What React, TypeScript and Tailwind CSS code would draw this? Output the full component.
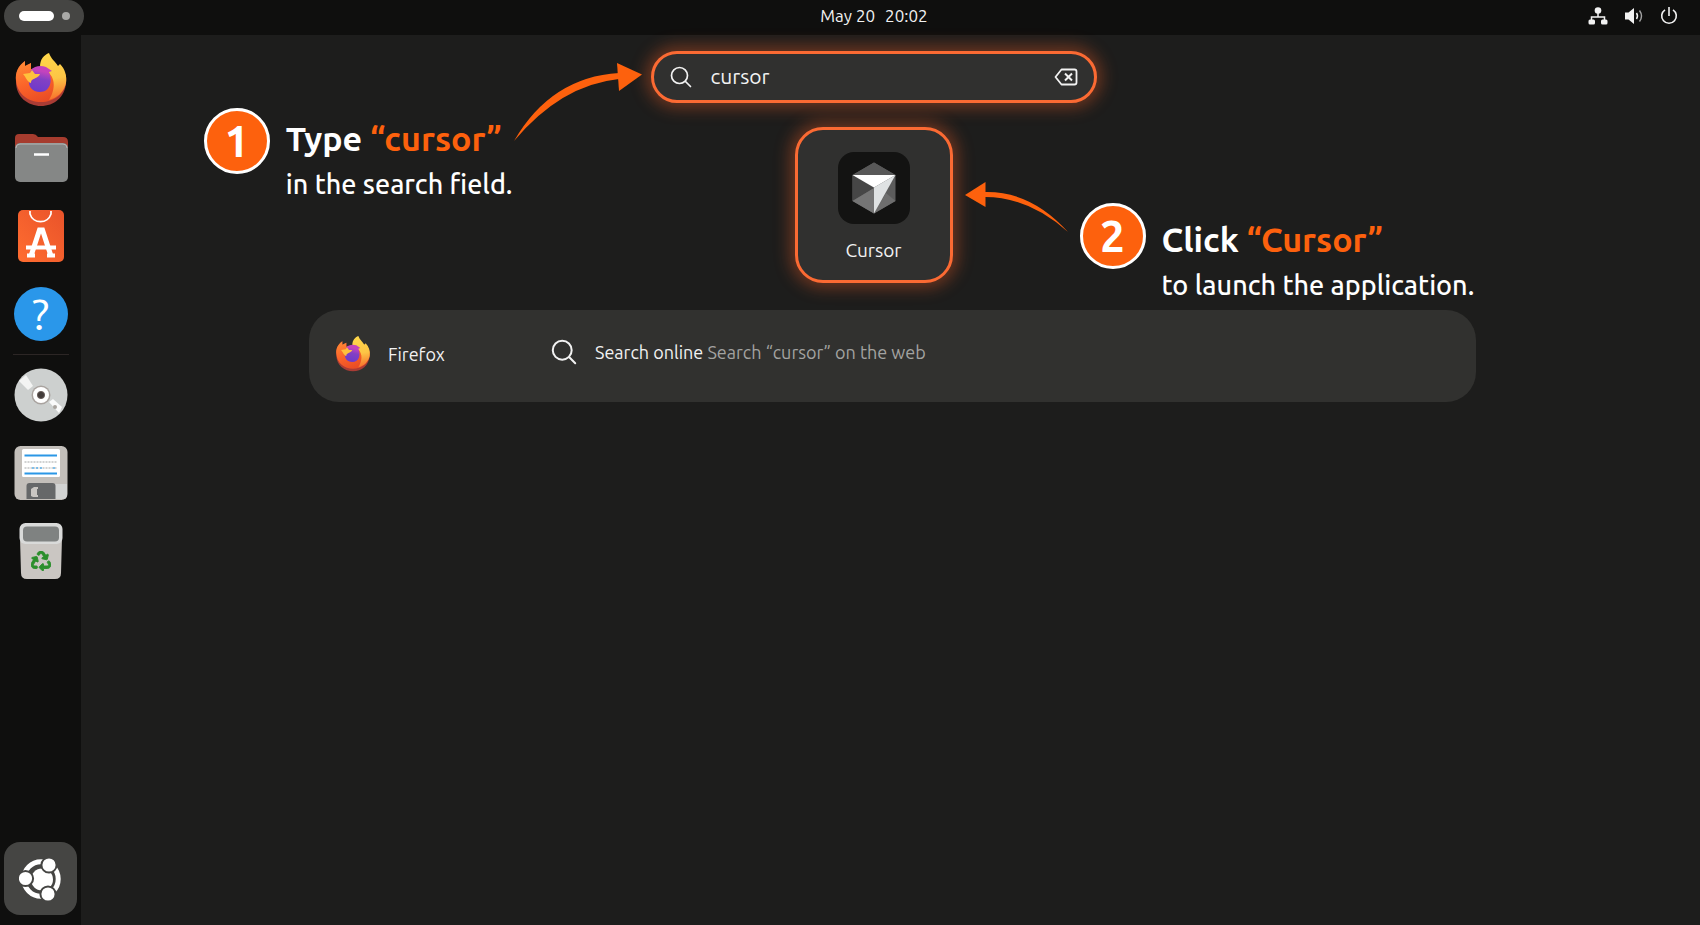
import { useState } from "react";
import type { ReactNode } from "react";
import { FaRecycle } from "react-icons/fa";

function FirefoxIcon({ className }: { className: string }) {
  return (
    <svg viewBox="0 0 54 56" className={className} aria-hidden="true">
      <defs>
        <linearGradient id="ff-body" x1="0.15" y1="0" x2="0.6" y2="1">
          <stop offset="0" stopColor="#ff8a35" />
          <stop offset="0.5" stopColor="#fb6429" />
          <stop offset="1" stopColor="#e84a24" />
        </linearGradient>
        <linearGradient id="ff-flame" x1="0.4" y1="0" x2="0.5" y2="1">
          <stop offset="0" stopColor="#ffd84a" />
          <stop offset="0.55" stopColor="#fdc545" />
          <stop offset="1" stopColor="#f7702c" />
        </linearGradient>
        <linearGradient id="ff-globe" x1="0.6" y1="0" x2="0.4" y2="1">
          <stop offset="0.2" stopColor="#c443bd" />
          <stop offset="0.5" stopColor="#8240c4" />
          <stop offset="1" stopColor="#6c3acb" />
        </linearGradient>
      </defs>
      <path d="M2 30C1 21 4 14 11 9v5l6-3v6l28-3c5 5 8 10 7 17-1 14-12 23-25 23S2 45 2 30z" fill="#a93c35" />
      <path d="M2 28C1 21 4 14 11 9v5l6-3v6l28-3c5 4 8 9 7 15-1 13-12 21-25 21S3 42 2 28z" fill="url(#ff-body)" />
      <path d="M26 15c0-8 4-12 9-14 2 6 6 8 9 13l2-2c5 5 7 12 6 19-2 9-9 15-17 17 5-8 8-20-1-28z" fill="url(#ff-flame)" />
      <path d="M17 18c3-4 10-5 15-3l6 4-3 1c4 9 1 20-9 20-8 0-12-6-11-12z" fill="url(#ff-globe)" />
      <path d="M9 22l7-1 2-3 3 4h5c-1 3-5 4-8 6-1 1-1 2-1 3-4-1-5-6-8-9z" fill="#ffc13c" />
    </svg>
  );
}

function FilesIcon() {
  return (
    <svg viewBox="0 0 54 54" className="size-[54px]" aria-hidden="true">
      <path d="M1 7q0-4 4-4h14q3 0 5 3h25q5 0 5 5v12H1z" fill="#a63c2e" />
      <rect x="1" y="12" width="53" height="39" rx="5" fill="#858786" />
      <path d="M2 17q0-4 4-4h43q4 0 4 4" stroke="#b4b6b4" fill="none" />
      <path d="M20 23.500h15" stroke="#fff" strokeWidth="2.500" />
    </svg>
  );
}

function AppCenterIcon() {
  return (
    <svg viewBox="0 0 54 54" className="size-[54px]" aria-hidden="true">
      <defs>
        <linearGradient id="ac" x1="1" y1="0" x2="0" y2="1">
          <stop offset="0" stopColor="#e9532a" />
          <stop offset="1" stopColor="#ff6d30" />
        </linearGradient>
      </defs>
      <rect x="4" y="1" width="46" height="52" rx="5" fill="url(#ac)" />
      <g stroke="#fff" fill="none">
        <path d="M16 2v3a11 11 0 0 0 21 0V2" strokeWidth="1.700" />
        <path d="M17 47l8.500-26h3l8.500 26" strokeWidth="5" />
        <path d="M12 38.500h30M13 46.500h8M33 46.500h8" strokeWidth="4" />
      </g>
    </svg>
  );
}

function HelpIcon() {
  return (
    <span className="flex size-[54px] items-center justify-center rounded-full bg-[#2a97ea] text-[44px] leading-none text-white">
      ?
    </span>
  );
}

function DiscIcon() {
  return (
    <svg viewBox="0 0 54 54" className="size-[54px]" aria-hidden="true">
      <circle cx="27" cy="27" r="26.500" fill="#cdd0cf" />
      <path d="M5 13l7-6 7 11-5 4z" fill="#f3f4f3" />
      <path d="M35 34l4-3 9 8-3 6z" fill="#fafafa" />
      <circle cx="41" cy="39" r="2" fill="#a8a39e" />
      <circle cx="27" cy="27" r="9.500" fill="#a9a39f" />
      <circle cx="27" cy="27" r="8" fill="#fff" />
      <circle cx="27" cy="27" r="3.600" fill="#433c3a" stroke="#6a5f5b" />
    </svg>
  );
}

function FloppyIcon() {
  return (
    <svg viewBox="0 0 54 54" className="size-[54px]" aria-hidden="true">
      <rect x="0.500" y="0" width="53" height="54" rx="6" fill="#c3bfba" />
      <path d="M41 38h12v11q0 4-4 4h-8z" fill="#d2d3d2" />
      <rect x="8" y="3" width="38" height="28" rx="1.500" fill="#fff" />
      <path d="M10.500 9.500H43M10.500 27.500H43" stroke="#2b97e6" strokeWidth="2" />
      <path d="M10.500 16H43M10.500 22H43" stroke="#c2c4c4" strokeWidth="1.500" strokeDasharray="2 1" />
      <path d="M18 22h12M39 22h4" stroke="#5fb2ec" strokeWidth="1.500" strokeDasharray="2 2" />
      <path d="M12.500 53V40q0-3 3-3h23q3 0 3 3v13z" fill="#666869" />
      <path d="M17 50v-7l3-2h4v2h-1v6h1v2h-5z" fill="#c9c6c2" />
    </svg>
  );
}

function TrashIcon() {
  return (
    <span className="relative flex h-14 w-11 items-end justify-center">
      <svg viewBox="0 0 44 56" className="absolute inset-0" aria-hidden="true">
        <path d="M1 15h42l-1 35q0 6-6 6H8q-6 0-6-6z" fill="#cac6c2" />
        <rect x="0.500" y="0" width="43" height="21" rx="6" fill="#d9dad9" />
        <rect x="4" y="3.500" width="36" height="15" rx="4" fill="#7f8281" />
      </svg>
      <FaRecycle className="relative mb-2 size-5 stroke-[#2b8f2c] stroke-[24px] text-[#2b8f2c]" />
    </span>
  );
}

function UbuntuIcon() {
  return (
    <svg viewBox="0 0 44 44" className="size-11" aria-hidden="true">
      <circle cx="22" cy="22" r="17.200" fill="none" stroke="#fff" strokeWidth="5" />
      <circle cx="23" cy="22.500" r="11" fill="#fff" />
      <g fill="#fff" stroke="#454543" strokeWidth="2">
        <circle cx="6.500" cy="21.500" r="7.600" />
        <circle cx="30" cy="8" r="7.600" />
        <circle cx="29" cy="37" r="7.600" />
      </g>
    </svg>
  );
}

function CursorLogo() {
  return (
    <span className="flex size-[72px] items-center justify-center rounded-2xl bg-[#131312]">
      <svg viewBox="0 0 44 52" className="h-[52px] w-11" aria-hidden="true">
        <path d="M22 0.500L43.500 13v26L22 51.500 0.500 39V13z" fill="#5c5c5c" />
        <path d="M22 0.500L43.500 13H0.500z" fill="#585858" />
        <path d="M0.500 13L22 26 0.500 39z" fill="#464646" />
        <path d="M0.500 39L22 26v25.500z" fill="#757575" />
        <path d="M43.500 39L22 51.500 34 31z" fill="#6e6e6e" />
        <path d="M0.500 13h43L22 25.500z" fill="#fff" />
        <path d="M43.500 13L22 51.500v-26z" fill="#dfe2e3" />
      </svg>
    </span>
  );
}

function SearchIcon({ className }: { className: string }) {
  return (
    <svg viewBox="0 0 22 22" className={className} fill="none" stroke="#f2f2f2" strokeWidth="1.700" aria-hidden="true">
      <circle cx="9.500" cy="9.500" r="8" />
      <path d="M15.500 15.500l5 5" strokeLinecap="round" />
    </svg>
  );
}

const dockApps: { name: string; icon: ReactNode }[] = [
  { name: "Firefox", icon: <FirefoxIcon className="h-14 w-[54px]" /> },
  { name: "Files", icon: <FilesIcon /> },
  { name: "App Center", icon: <AppCenterIcon /> },
  { name: "Help", icon: <HelpIcon /> },
];

const dockVolumes: { name: string; icon: ReactNode }[] = [
  { name: "Disc", icon: <DiscIcon /> },
  { name: "Floppy disk", icon: <FloppyIcon /> },
  { name: "Trash", icon: <TrashIcon /> },
];

function DockList({ items }: { items: { name: string; icon: ReactNode }[] }) {
  return (
    <ul className="flex flex-col gap-6">
      {items.map((item) => (
        <li key={item.name}>
          <button type="button" aria-label={item.name} className="flex size-[54px] items-center justify-center">
            {item.icon}
          </button>
        </li>
      ))}
    </ul>
  );
}

function Dock() {
  return (
    <nav aria-label="Dock" className="flex w-[81px] shrink-0 flex-col items-center bg-[#0f0f0e] pt-[18px] pb-[10px]">
      <DockList items={dockApps} />
      <hr className="my-[13px] w-14 border-[#2c2625]" />
      <DockList items={dockVolumes} />
      <button
        type="button"
        aria-label="Show apps"
        className="mt-auto flex size-[73px] items-center justify-center rounded-2xl bg-[#454543]"
      >
        <UbuntuIcon />
      </button>
    </nav>
  );
}

function TopBar() {
  return (
    <header className="grid h-[35px] shrink-0 grid-cols-[48px_1fr_auto_1fr] bg-[#0f0f0e] text-[#f2f2f2]">
      <button
        type="button"
        aria-label="Activities"
        className="col-span-2 ml-1 flex h-8 w-20 items-center justify-center gap-2 rounded-full bg-[#454543]"
      >
        <span className="h-[10px] w-[35px] rounded-full bg-white" />
        <span className="size-2 rounded-full bg-[#a9a9a7]" />
      </button>
      <button type="button" className="flex h-8 items-center gap-[10px] text-[17px]">
        <span>May 20</span>
        <span>20:02</span>
      </button>
      <div className="mr-[22px] flex h-8 items-center justify-end gap-4">
        <svg viewBox="0 0 20 18" className="h-[18px] w-5" fill="currentColor" aria-hidden="true">
          <circle cx="10" cy="3.500" r="3.300" />
          <path d="M10 6v4M3.500 14v-4h13v4" fill="none" stroke="currentColor" strokeWidth="1.500" />
          <rect x="0.500" y="12.500" width="6.500" height="5" rx="1.500" />
          <rect x="13" y="12.500" width="6.500" height="5" rx="1.500" />
        </svg>
        <svg viewBox="0 0 20 18" className="h-[18px] w-5" fill="currentColor" aria-hidden="true">
          <path d="M1 5.500h3.500L10 1v16l-5.500-4.500H1z" />
          <path d="M12.500 6q2 3 0 6" fill="none" stroke="currentColor" strokeWidth="1.500" />
          <path d="M15.500 3.500q4 5.500 0 11" fill="none" stroke="#a3a3a3" strokeWidth="1.400" />
        </svg>
        <svg viewBox="0 0 18 18" className="size-[18px]" fill="none" stroke="currentColor" strokeWidth="1.600" aria-hidden="true">
          <path d="M9 0v9M5 2.800a7.300 7.300 0 1 0 8 0" />
        </svg>
      </div>
    </header>
  );
}

interface CalloutProps {
  step: number;
  verb: string;
  target: string;
  detail: string;
  textClassName: string;
}

function Callout({ step, verb, target, detail, textClassName }: CalloutProps) {
  return (
    <div className="flex gap-4 text-white">
      <span className="flex size-[66px] shrink-0 items-center justify-center rounded-full border-[3px] border-white bg-[#fd610d] text-[44px] leading-none font-bold">
        {step}
      </span>
      <div className={`whitespace-nowrap ${textClassName}`}>
        <h2 className="text-[34px] leading-[45px] font-bold">
          {verb} <span className="text-[#fd610d]">“{target}”</span>
        </h2>
        <p className="text-[27px] leading-[47px] font-medium">{detail}</p>
      </div>
    </div>
  );
}

export default function App() {
  const [query, setQuery] = useState("cursor");

  return (
    <div className="flex min-h-screen flex-col bg-[#1d1d1c] font-['Ubuntu','Noto_Sans',sans-serif]">
      <TopBar />
      <div className="flex flex-1">
        <Dock />
        <main className="min-w-0 flex-1 pt-4">
          <div className="grid grid-cols-[1fr_446px_1fr] grid-rows-[52px_156px] gap-y-6 pr-[34px]">
            <form
              role="search"
              onSubmit={(e) => e.preventDefault()}
              className="col-start-2 row-start-1 flex items-center rounded-full border-[3px] border-[#fb6a33] bg-[#30302f] px-4 shadow-[0_0_16px_5px_rgba(251,96,40,0.360)]"
            >
              <SearchIcon className="size-[22px] shrink-0" />
              <input
                type="text"
                aria-label="Search"
                value={query}
                onChange={(e) => setQuery(e.target.value)}
                className="ml-[19px] min-w-0 flex-1 bg-transparent text-[21px] text-[#f2f2f2] outline-none"
              />
              <button type="button" aria-label="Clear search" onClick={() => setQuery("")}>
                <svg viewBox="0 0 24 18" className="h-[18px] w-6" fill="none" stroke="#f2f2f2" strokeWidth="1.800" aria-hidden="true">
                  <path d="M7.500 1.500h13q2 0 2 2v11q0 2-2 2h-13L1.500 9z" strokeLinejoin="round" />
                  <path d="M11 5.500l7 7M18 5.500l-7 7" strokeWidth="2" />
                </svg>
              </button>
            </form>

            <button
              type="button"
              className="col-start-2 row-start-2 flex w-[158px] flex-col items-center justify-self-center rounded-[28px] border-[3px] border-[#fb6a33] bg-[#30302f] pt-[22px] text-[19px] text-[#f2f2f2] shadow-[0_0_16px_5px_rgba(251,96,40,0.360)]"
            >
              <CursorLogo />
              <span className="mt-3">Cursor</span>
            </button>

            {/* Step 1 */}
            <div className="col-start-1 row-span-2 row-start-1 flex items-start justify-self-end pr-2">
              <div className="pt-[57px]">
                <Callout step={1} verb="Type" target="cursor" detail="in the search field." textClassName="pt-2" />
              </div>
              <svg viewBox="0 0 130 82" className="mt-[10px] h-[82px] w-[130px] shrink-0" fill="#fd610d" aria-hidden="true">
                <path d="M1 80Q38 16 106 12v6Q48 24 1 80z" />
                <path d="M129 13.500L104 2l2 28z" />
              </svg>
            </div>

            {/* Step 2 */}
            <div className="z-10 col-span-2 col-start-2 row-start-2 ml-[314px] flex items-start pt-[54px]">
              <svg viewBox="0 0 104 52" className="h-[52px] w-[104px] shrink-0" fill="#fd610d" aria-hidden="true">
                <path d="M20 11Q66 10 103 51 64 16 20 16z" />
                <path d="M0 14L20.500 1v25z" />
              </svg>
              <div className="ml-[11px] pt-[22px]">
                <Callout step={2} verb="Click" target="Cursor" detail="to launch the application." textClassName="pt-[14px]" />
              </div>
            </div>
          </div>

          <section className="mt-[27px] mr-[224px] ml-[228px] flex h-[92px] items-center rounded-[30px] bg-[#31312f] px-[26px] pb-1 text-lg text-[#f2f2f2]">
            <div className="flex w-[216px] items-center gap-[17px]">
              <FirefoxIcon className="h-[38px] w-9" />
              <span>Firefox</span>
            </div>
            <a href="#web" className="flex items-center gap-[18px] pb-1">
              <SearchIcon className="size-[26px]" />
              <span>
                Search online <span className="text-[#a3a3a1]">Search “cursor” on the web</span>
              </span>
            </a>
          </section>
        </main>
      </div>
    </div>
  );
}
